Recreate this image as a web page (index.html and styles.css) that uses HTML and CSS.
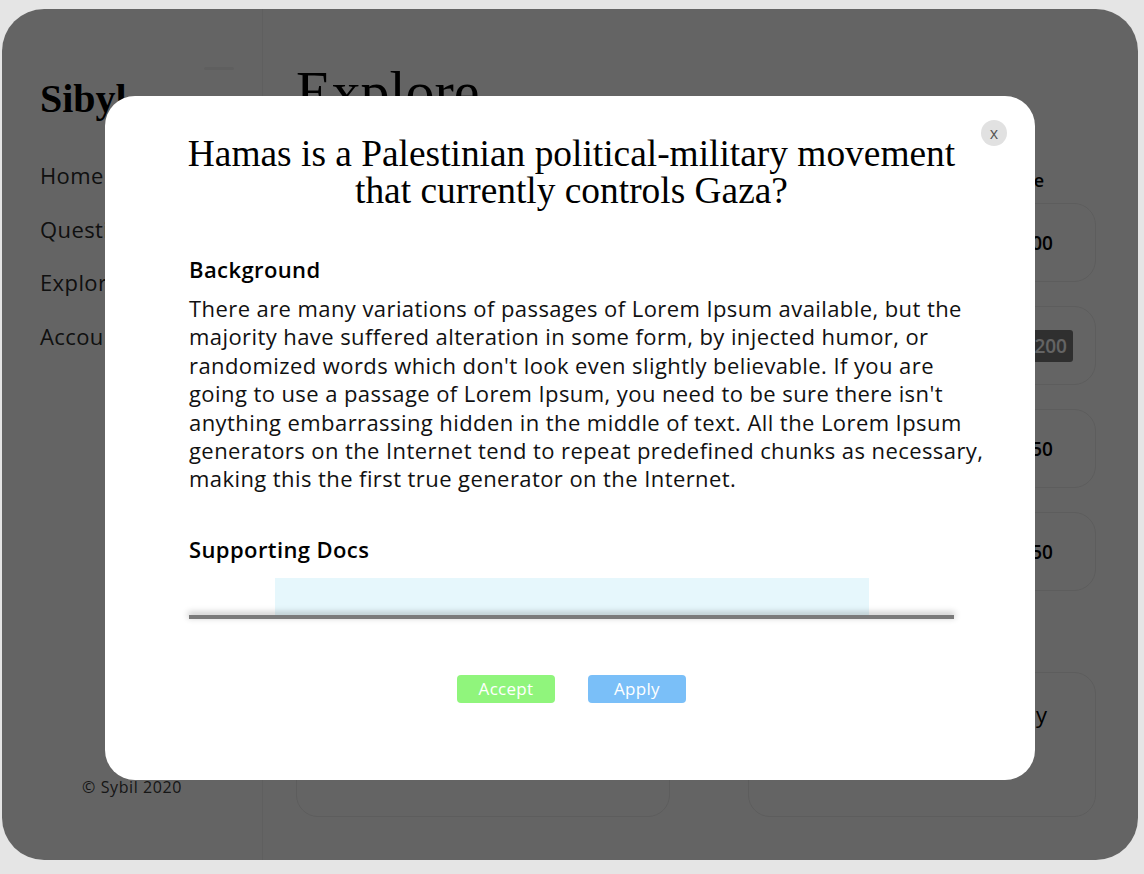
FILE: index.html
```html
<!DOCTYPE html>
<html>
<head>
<meta charset="utf-8">
<link rel="stylesheet" href="styles.css">
</head>
<body>
<div class="app">
  <aside class="sidebar">
    <div class="brand-row">
      <div class="brand">Sibyl</div>
      <div class="toggle"></div>
    </div>
    <nav class="nav">
      <a class="nav-item">Home</a>
      <a class="nav-item">Questions</a>
      <a class="nav-item">Explore</a>
      <a class="nav-item">Account</a>
    </nav>
    <div class="copyright">© Sybil 2020</div>
  </aside>
  <main class="main">
    <h1 class="page-title">Explore</h1>
    <div class="grid">
      <section class="featured">
        <div class="featured-card"></div>
      </section>
      <section class="list">
        <div class="list-head"><span>Volume</span></div>
        <div class="card"><span class="value">$1,000</span></div>
        <div class="card"><span class="badge">$1,200</span></div>
        <div class="card"><span class="value">$850</span></div>
        <div class="card"><span class="value">$1,750</span></div>
      </section>
      <div class="big-card"></div>
      <div class="big-card right"><span class="big-text">Weekly</span></div>
    </div>
  </main>
  <div class="overlay"></div>
  <div class="modal">
    <button class="close">x</button>
    <h2 class="question">Hamas is a Palestinian political-military movement that currently controls Gaza?</h2>
    <h3 class="section-title">Background</h3>
    <p class="body-text">There are many variations of passages of Lorem Ipsum available, but the majority have suffered alteration in some form, by injected humor, or randomized words which don't look even slightly believable. If you are going to use a passage of Lorem Ipsum, you need to be sure there isn't anything embarrassing hidden in the middle of text. All the Lorem Ipsum generators on the Internet tend to repeat predefined chunks as necessary, making this the first true generator on the Internet.</p>
    <h3 class="section-title docs-title">Supporting Docs</h3>
    <div class="docs">
      <div class="doc"></div>
      <div class="docs-rail"></div>
    </div>
    <div class="actions">
      <button class="btn accept">Accept</button>
      <button class="btn apply">Apply</button>
    </div>
  </div>
</div>
</body>
</html>
```
FILE: styles.css
```css
html, body {
  margin: 0;
  padding: 0;
}
body {
  background: #e5e5e5;
  font-family: "Open Sans", "Liberation Sans", sans-serif;
  width: 1144px;
  height: 874px;
  overflow: hidden;
}
.app {
  position: relative;
  margin: 9px 0 0 2px;
  width: 1136px;
  height: 851px;
  background: #fff;
  border-radius: 42px;
  overflow: hidden;
  display: flex;
}
.sidebar {
  width: 261px;
  border-right: 1px solid #f2f2f2;
  padding: 66px 0 0 38px;
  box-sizing: border-box;
  display: flex;
  flex-direction: column;
  flex-shrink: 0;
}
.brand-row {
  display: flex;
  align-items: flex-start;
  justify-content: space-between;
  padding-right: 28px;
}
.brand {
  font-family: "Liberation Serif", serif;
  font-weight: bold;
  font-size: 40px;
  line-height: 48px;
  color: #000;
}
.toggle {
  width: 30px;
  height: 3px;
  margin-top: -8px;
  background: #f3f3f3;
  border-radius: 2px;
}
.nav {
  display: flex;
  flex-direction: column;
  gap: 27px;
  margin-top: 39px;
}
.nav-item {
  font-size: 22px;
  line-height: 26.5px;
  letter-spacing: 0.4px;
  color: #2a2a2a;
}
.copyright {
  margin-top: auto;
  margin-bottom: 62px;
  margin-left: 42px;
  font-size: 16px;
  letter-spacing: 0.6px;
  color: #3a3a3a;
}
.main {
  flex: 1;
  padding: 48px 0 0 33px;
}
.page-title {
  margin: 0;
  font-family: "Liberation Serif", serif;
  font-weight: normal;
  font-size: 58px;
  line-height: 70px;
  color: #000;
}
.grid {
  display: grid;
  grid-template-columns: 374px 348px;
  column-gap: 78px;
  row-gap: 81px;
  margin-top: 42px;
}
.featured-card {
  box-sizing: border-box;
  height: 380px;
  margin-top: 34px;
  border-radius: 22px;
  border: 1px solid #ececec;
}
.list {
  display: flex;
  flex-direction: column;
  gap: 24px;
}
.list-head {
  display: flex;
  justify-content: flex-end;
  font-weight: 600;
  font-size: 18px;
  line-height: 22px;
  padding: 0 52px 0 20px;
  margin-bottom: -12px;
}
.card {
  box-sizing: border-box;
  height: 79px;
  border-radius: 22px;
  border: 1px solid #ececec;
  display: flex;
  align-items: center;
  justify-content: flex-end;
  padding: 0 42px 0 22px;
  font-size: 19px;
  font-weight: 600;
}
.badge {
  background: #787878;
  color: #fff;
  padding: 3px 6px;
  border-radius: 3px;
  margin-right: -20px;
}
.big-card {
  box-sizing: border-box;
  height: 145px;
  border-radius: 22px;
  border: 1px solid #ececec;
}
.big-card.right {
  display: flex;
  justify-content: flex-end;
  padding: 26px 48px 0 0;
}
.big-text {
  font-size: 22px;
  line-height: 30px;
}
.overlay {
  position: absolute;
  inset: 0;
  background: rgba(0, 0, 0, 0.607);
}
.modal {
  position: absolute;
  left: 103px;
  top: 87px;
  width: 930px;
  height: 684px;
  box-sizing: border-box;
  background: #fff;
  border-radius: 30px;
  padding: 39px 81px 0 84px;
}
.close {
  position: absolute;
  top: 24px;
  right: 28px;
  width: 26px;
  height: 26px;
  border-radius: 50%;
  border: none;
  background: #e1e1e1;
  color: #555;
  font-family: "Open Sans", sans-serif;
  font-size: 16px;
  line-height: 24px;
  padding: 0;
}
.question {
  margin: 0 -12px;
  text-align: center;
  font-family: "Liberation Serif", serif;
  font-weight: normal;
  font-size: 37.4px;
  line-height: 37px;
  color: #000;
}
.section-title {
  margin: 46px 0 0;
  font-size: 22px;
  line-height: 28px;
  font-weight: 600;
  letter-spacing: 0.4px;
  color: #000;
}
.body-text {
  margin: 11px -35px 0 0;
  font-size: 22px;
  line-height: 28.4px;
  letter-spacing: 0.42px;
  color: #111;
}
.docs-title {
  margin-top: 42px;
}
.docs {
  margin-top: 15px;
  display: flex;
  flex-direction: column;
  align-items: center;
}
.doc {
  width: 594px;
  height: 37px;
  background: #e6f7fc;
}
.docs-rail {
  align-self: stretch;
  height: 4px;
  background: #7a7a7a;
  box-shadow: 0 -2px 6px 1px rgba(0, 0, 0, 0.22);
}
.actions {
  display: flex;
  justify-content: center;
  gap: 33px;
  margin-top: 56px;
}
.btn {
  width: 98px;
  height: 28px;
  border: none;
  border-radius: 4px;
  color: #fff;
  font-family: "Open Sans", sans-serif;
  font-size: 17px;
  letter-spacing: 0.3px;
  padding: 0;
}
.accept { background: #90f57c; }
.apply { background: #7abff8; }
```
